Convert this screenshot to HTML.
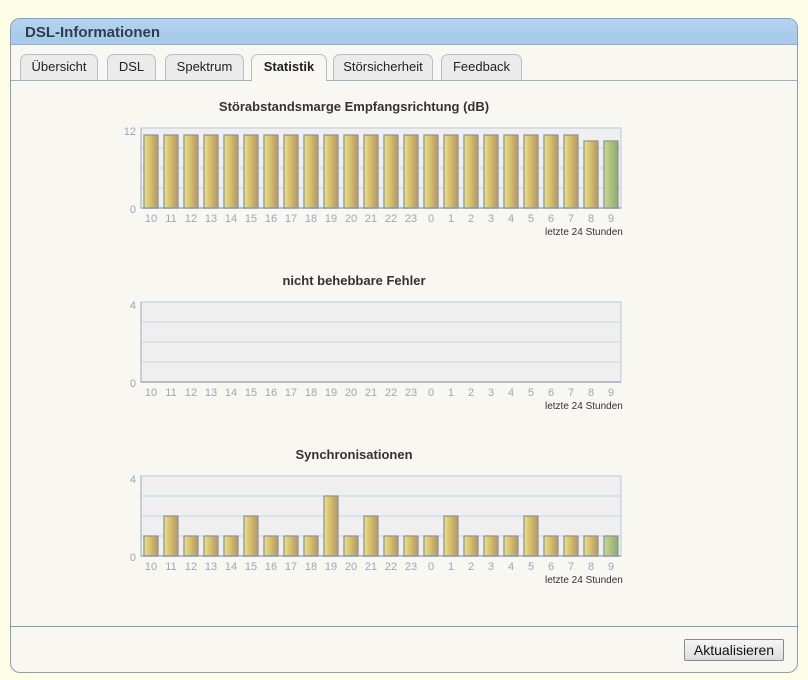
<!DOCTYPE html>
<html><head><meta charset="utf-8"><style>
body{margin:0;width:808px;height:680px;background:#fefde6;font-family:"Liberation Sans",sans-serif;position:relative;overflow:hidden}
.panel{position:absolute;left:10px;top:18px;width:786px;height:653px;border:1px solid #8a9fae;border-radius:10px;background:#f8f7f2;overflow:hidden}
.hdr{height:25px;background:linear-gradient(#b4d3ef,#a5c9ea);border-bottom:1px solid #8fb0cc;font-weight:bold;font-size:15px;color:#2f3d4d;line-height:28px;padding-left:14px}
.tabs{position:absolute;top:35px;left:0;width:786px;height:26px;border-bottom:1px solid #9fb0bd}
.tab{position:absolute;top:0;height:25px;border:1px solid #b8bfc5;border-bottom:none;border-radius:7px 7px 0 0;background:#ebebeb;font-size:13px;color:#222;text-align:center;line-height:24px}
.tab.act{background:#f8f7f2;font-weight:bold;height:26px;z-index:2}
.foot{position:absolute;top:607px;left:0;width:786px;border-top:1px solid #8a9fae}
.btn{position:absolute;left:673px;top:620px;width:98px;height:20px;border:1px solid #8a8a8a;border-radius:2px;background:linear-gradient(#f6f6f6,#dcdcdc);font-size:14px;color:#111;text-align:center;line-height:20px}
svg{position:absolute;left:0}
</style></head><body>
<div class="panel">
<div class="hdr">DSL-Informationen</div>
<div class="tabs">
<div class="tab" style="left:9px;width:76px">Übersicht</div>
<div class="tab" style="left:96px;width:47px">DSL</div>
<div class="tab" style="left:154px;width:77px">Spektrum</div>
<div class="tab act" style="left:240px;width:74px">Statistik</div>
<div class="tab" style="left:322px;width:98px">Störsicherheit</div>
<div class="tab" style="left:430px;width:79px">Feedback</div>
</div>
<div class="foot"></div>
<div class="btn">Aktualisieren</div>
</div>
<svg width="808" height="680" style="top:0">
<defs>
<linearGradient id="g" x1="0" x2="1"><stop offset="0" stop-color="#ece27c"/><stop offset="1" stop-color="#b89660"/></linearGradient>
<linearGradient id="gg" x1="0" x2="1"><stop offset="0" stop-color="#c9da8e"/><stop offset="1" stop-color="#8ea870"/></linearGradient>
<g id="lab" font-size="11" fill="#9aa8b8" text-anchor="middle">
<text x="151">10</text><text x="171">11</text><text x="191">12</text><text x="211">13</text><text x="231">14</text><text x="251">15</text><text x="271">16</text><text x="291">17</text><text x="311">18</text><text x="331">19</text><text x="351">20</text><text x="371">21</text><text x="391">22</text><text x="411">23</text><text x="431">0</text><text x="451">1</text><text x="471">2</text><text x="491">3</text><text x="511">4</text><text x="531">5</text><text x="551">6</text><text x="571">7</text><text x="591">8</text><text x="611">9</text>
</g>
<g id="plot"><rect x="141" y="0" width="480" height="80" fill="#efefef" stroke="#b8c8d8"/>
<g stroke="#c8d4e0"><line x1="141" x2="621" y1="20" y2="20"/><line x1="141" x2="621" y1="40" y2="40"/><line x1="141" x2="621" y1="60" y2="60"/></g>
<line x1="141" x2="621" y1="80" y2="80" stroke="#9aabbd" stroke-width="1.5"/><line x1="141" x2="141" y1="0" y2="80" stroke="#9aabbd"/></g>
</defs>
<g font-size="13" font-weight="bold" fill="#333" text-anchor="middle">
<text x="354" y="111">Störabstandsmarge Empfangsrichtung (dB)</text>
<text x="354" y="285">nicht behebbare Fehler</text>
<text x="354" y="459">Synchronisationen</text></g>
<g font-size="10" fill="#333"><text x="545" y="235">letzte 24 Stunden</text><text x="545" y="409">letzte 24 Stunden</text><text x="545" y="583">letzte 24 Stunden</text></g>
<g transform="translate(0,128)"><use href="#plot"/>
<g fill="url(#g)" stroke="#8d96a6" stroke-width="1.3">
<rect x="144" y="7" width="14" height="73"/><rect x="164" y="7" width="14" height="73"/><rect x="184" y="7" width="14" height="73"/><rect x="204" y="7" width="14" height="73"/><rect x="224" y="7" width="14" height="73"/><rect x="244" y="7" width="14" height="73"/><rect x="264" y="7" width="14" height="73"/><rect x="284" y="7" width="14" height="73"/><rect x="304" y="7" width="14" height="73"/><rect x="324" y="7" width="14" height="73"/><rect x="344" y="7" width="14" height="73"/><rect x="364" y="7" width="14" height="73"/><rect x="384" y="7" width="14" height="73"/><rect x="404" y="7" width="14" height="73"/><rect x="424" y="7" width="14" height="73"/><rect x="444" y="7" width="14" height="73"/><rect x="464" y="7" width="14" height="73"/><rect x="484" y="7" width="14" height="73"/><rect x="504" y="7" width="14" height="73"/><rect x="524" y="7" width="14" height="73"/><rect x="544" y="7" width="14" height="73"/><rect x="564" y="7" width="14" height="73"/><rect x="584" y="13" width="14" height="67"/><rect x="604" y="13" width="14" height="67" fill="url(#gg)"/></g>
<g font-size="11" fill="#9aa8b8" text-anchor="end"><text x="136" y="7">12</text><text x="136" y="85">0</text></g>
<use href="#lab" y="94"/></g>
<g transform="translate(0,302)"><use href="#plot"/>
<g font-size="11" fill="#9aa8b8" text-anchor="end"><text x="136" y="7">4</text><text x="136" y="85">0</text></g>
<use href="#lab" y="94"/></g>
<g transform="translate(0,476)"><use href="#plot"/>
<g fill="url(#g)" stroke="#8d96a6" stroke-width="1.3">
<rect x="144" y="60" width="14" height="20"/><rect x="164" y="40" width="14" height="40"/><rect x="184" y="60" width="14" height="20"/><rect x="204" y="60" width="14" height="20"/><rect x="224" y="60" width="14" height="20"/><rect x="244" y="40" width="14" height="40"/><rect x="264" y="60" width="14" height="20"/><rect x="284" y="60" width="14" height="20"/><rect x="304" y="60" width="14" height="20"/><rect x="324" y="20" width="14" height="60"/><rect x="344" y="60" width="14" height="20"/><rect x="364" y="40" width="14" height="40"/><rect x="384" y="60" width="14" height="20"/><rect x="404" y="60" width="14" height="20"/><rect x="424" y="60" width="14" height="20"/><rect x="444" y="40" width="14" height="40"/><rect x="464" y="60" width="14" height="20"/><rect x="484" y="60" width="14" height="20"/><rect x="504" y="60" width="14" height="20"/><rect x="524" y="40" width="14" height="40"/><rect x="544" y="60" width="14" height="20"/><rect x="564" y="60" width="14" height="20"/><rect x="584" y="60" width="14" height="20"/><rect x="604" y="60" width="14" height="20" fill="url(#gg)"/></g>
<g font-size="11" fill="#9aa8b8" text-anchor="end"><text x="136" y="7">4</text><text x="136" y="85">0</text></g>
<use href="#lab" y="94"/></g>
</svg>
</body></html>
